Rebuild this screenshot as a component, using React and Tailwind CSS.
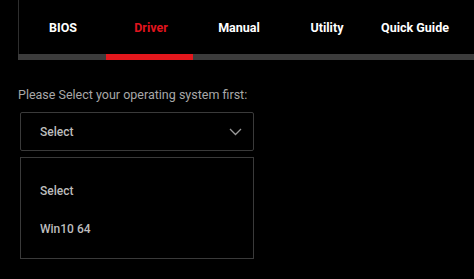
const tabs = ['BIOS', 'Driver', 'Manual', 'Utility', 'Quick Guide']

const App = () => {
  const active = 1

  return (
    <div className="w-full h-[279px] bg-black font-['Roboto',sans-serif] overflow-hidden">
      <div className="pl-[18px]">
        <div className="flex border-l border-[#2e2e2e] h-[54px] pt-[3px]">
          {tabs.map((t, i) => (
            <div
              key={t}
              className={`w-[88px] flex items-center justify-center text-[12.5px] font-bold ${
                i === active ? 'text-[#e0141e]' : 'text-white'
              }`}
            >
              {t}
            </div>
          ))}
        </div>
        <div className="h-[6px] bg-[#3c3c3c] flex">
          <div className="ml-[88px] w-[87px] bg-[#e3171c]" />
        </div>
      </div>

      <div className="pl-[18px] pt-[27px]">
        <p className="text-[12.5px] leading-4 text-[#a8a8a8]">
          Please Select your operating system first:
        </p>
        <div className="ml-[2px] w-[234px] mt-[9px]">
          <div className="h-[39px] border border-[#3a3a3a] rounded-[2px] flex items-center justify-between pl-[19px] pr-[11px]">
            <span className="text-[12px] font-medium text-[#bdbdbd]">Select</span>
            <svg width="13" height="8" viewBox="0 0 13 8" fill="none">
              <polyline
                points="1,1 6.5,6.5 12,1"
                stroke="#9a9a9a"
                strokeWidth="1.3"
              />
            </svg>
          </div>
          <div className="mt-[6px] h-[102px] border border-[#3a3a3a] flex flex-col pl-[19px] pt-[25px] gap-[22px]">
            <span className="text-[12px] font-medium leading-4 text-[#bdbdbd]">Select</span>
            <span className="text-[12px] font-medium leading-4 text-[#bdbdbd]">Win10 64</span>
          </div>
        </div>
      </div>
    </div>
  )
}

export default App
